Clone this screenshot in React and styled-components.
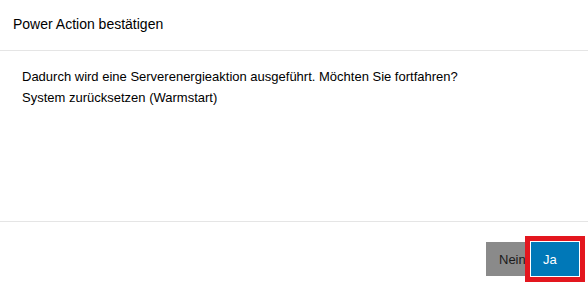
import styled, { createGlobalStyle } from "styled-components";

const Global = createGlobalStyle`
  html, body {
    margin: 0;
    padding: 0;
    background: #fff;
  }
  body {
    font-family: "Liberation Sans", Arial, sans-serif;
    color: #000;
  }
`;

export default function App() {
  return (
    <>
      <Global />
      <Dialog>
        <Header>
          <Title>Power Action bestätigen</Title>
        </Header>
        <Body>
          <Line>Dadurch wird eine Serverenergieaktion ausgeführt. Möchten Sie fortfahren?</Line>
          <Line>System zurücksetzen (Warmstart)</Line>
        </Body>
        <Footer>
          <Button>Nein</Button>
          <Highlight>
            <Button $primary>Ja</Button>
          </Highlight>
        </Footer>
      </Dialog>
    </>
  );
}

const Dialog = styled.div`
  width: 588px;
  height: 286px;
  display: flex;
  flex-direction: column;
  overflow: hidden;
`;

const Header = styled.div`
  height: 51px;
  flex-shrink: 0;
  box-sizing: border-box;
  border-bottom: 1px solid #e5e5e5;
  padding: 16px 13px 0;
`;

const Title = styled.div`
  font-size: 14px;
  line-height: 16px;
`;

const Body = styled.div`
  height: 171px;
  flex-shrink: 0;
  box-sizing: border-box;
  border-bottom: 1px solid #e5e5e5;
  padding: 15px 22px 0;
`;

const Line = styled.p`
  margin: 0;
  font-size: 13px;
  line-height: 21px;
`;

const Footer = styled.div`
  display: flex;
  justify-content: flex-end;
  align-items: flex-start;
  padding: 20px 9px 0 0;
`;

const Button = styled.button`
  width: ${(p) => (p.$primary ? "48px" : "45px")};
  height: 34px;
  padding: 0 0 0 ${(p) => (p.$primary ? "12px" : "13px")};
  border: none;
  outline: ${(p) => (p.$primary ? "1px solid #fff" : "none")};
  background: ${(p) => (p.$primary ? "#0078b8" : "#8a8a8a")};
  color: ${(p) => (p.$primary ? "#fff" : "#1a1a1a")};
  font-family: "Liberation Sans", Arial, sans-serif;
  font-size: 13px;
  text-align: left;
  white-space: nowrap;
  box-sizing: border-box;
`;

const Highlight = styled.div`
  position: relative;
  display: flex;
  &::after {
    content: "";
    position: absolute;
    left: -6px;
    top: -6px;
    right: -6px;
    bottom: -6px;
    border: 5px solid #e3161e;
    pointer-events: none;
  }
`;
